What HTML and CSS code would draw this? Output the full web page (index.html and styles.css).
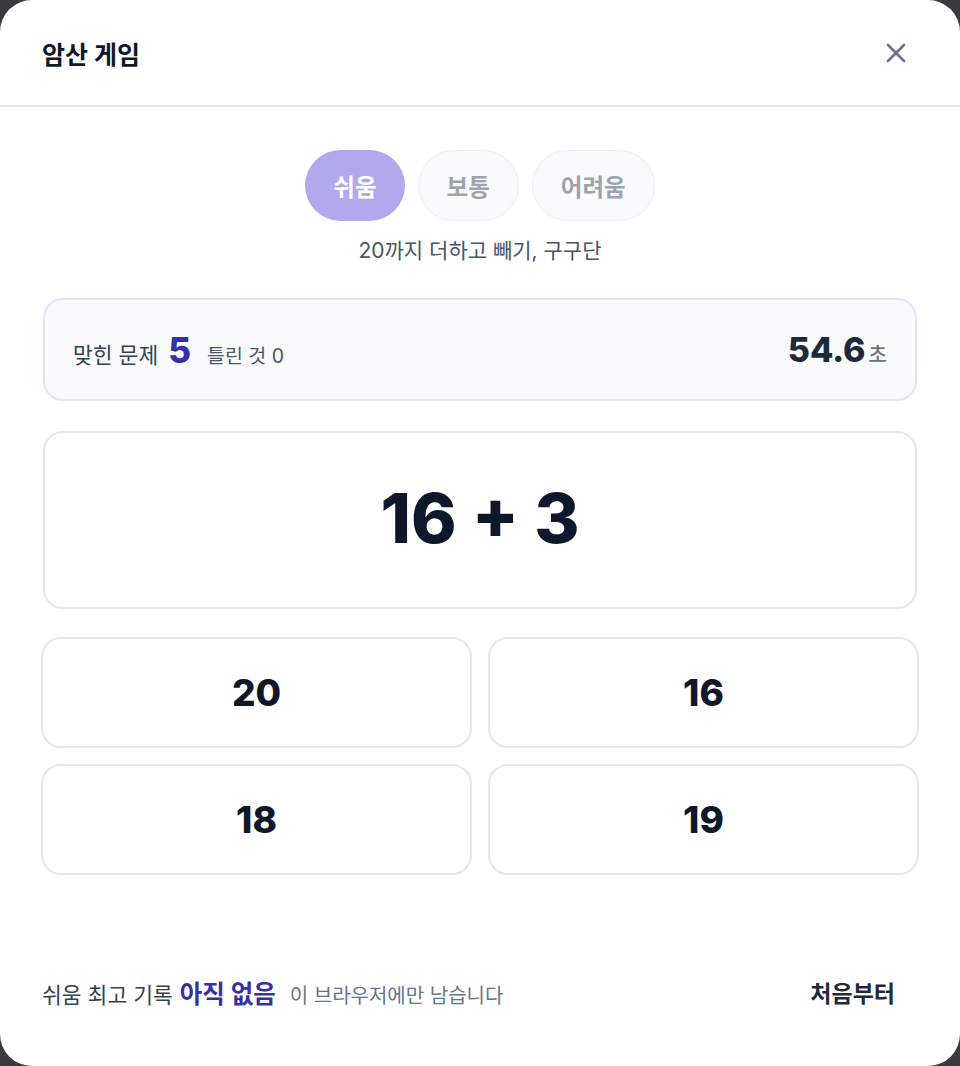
FILE: index.html
```html
<!DOCTYPE html>
<html lang="ko">

<head>
	<meta charset="utf-8">
	<title>암산 게임</title>
	<link rel="stylesheet" href="styles.css">
</head>

<body>
	<div class="modal">
		<div class="modal-head">
			<h1 class="title">암산 게임</h1>
			<button class="close" aria-label="닫기">
				<svg width="24" height="24" viewBox="0 0 24 24">
					<path d="M4 4L20 20M20 4L4 20" stroke="#64748b" stroke-width="2.6" stroke-linecap="round" fill="none" />
				</svg>
			</button>
		</div>

		<div class="modal-body">
			<ul class="levels">
				<li class="level active">쉬움</li>
				<li class="level">보통</li>
				<li class="level">어려움</li>
			</ul>
			<p class="level-desc">20까지 더하고 빼기, 구구단</p>

			<div class="score">
				<div class="score-left">
					<span class="score-label">맞힌 문제</span>
					<span class="score-num">5</span>
					<span class="score-wrong">틀린 것 0</span>
				</div>
				<div class="timer">
					<span class="timer-num">54.6</span>
					<span class="timer-unit">초</span>
				</div>
			</div>

			<div class="question">16 + 3</div>

			<div class="answers">
				<button class="answer">20</button>
				<button class="answer">16</button>
				<button class="answer">18</button>
				<button class="answer">19</button>
			</div>

			<div class="foot">
				<div class="record">
					<span class="record-label">쉬움 최고 기록</span>
					<span class="record-val">아직 없음</span>
					<span class="record-note">이 브라우저에만 남습니다</span>
				</div>
				<button class="restart">처음부터</button>
			</div>
		</div>
	</div>
</body>

</html>
```

FILE: styles.css
```css
* {
	box-sizing: border-box;
}

body {
	margin: 0;
	background: #3a3a3f;
	font-family: Inter, "Noto Sans CJK KR", sans-serif;
}

button {
	font-family: inherit;
	cursor: pointer;
}

.modal {
	width: 960px;
	height: 1066px;
	background: #fff;
	border-radius: 32px;
	display: flex;
	flex-direction: column;
	overflow: hidden;
}

.modal-head {
	height: 107px;
	border-bottom: 2px solid #e5e8ec;
	display: flex;
	align-items: center;
	justify-content: space-between;
	padding: 0 42px 0 42px;
}

.title {
	margin: 0;
	font-size: 25px;
	font-weight: 700;
	color: #0f172a;
}

.close {
	border: 0;
	background: none;
	padding: 0;
	width: 24px;
	height: 24px;
	margin-right: 10px;
}

.close svg {
	display: block;
}

.modal-body {
	flex: 1;
	display: flex;
	flex-direction: column;
	padding: 43px 42px 44px;
}

.levels {
	list-style: none;
	margin: 0;
	padding: 0;
	display: flex;
	justify-content: center;
	gap: 13px;
}

.level {
	height: 71px;
	padding: 0 28px;
	border-radius: 36px;
	border: 1px solid #eceff3;
	background: #f8fafc;
	color: #9ca3af;
	font-size: 23.5px;
	font-weight: 700;
	display: flex;
	align-items: center;
}

.level.active {
	background: #b0a9ee;
	border: 0;
	color: #fff;
}

.level-desc {
	margin: 15px 0 0;
	text-align: center;
	font-size: 21px;
	line-height: 29px;
	color: #475569;
}

.score {
	margin: 33px 1px 0;
	height: 103px;
	border: 2px solid #e2e8f0;
	border-radius: 20px;
	background: #f8fafc;
	display: flex;
	align-items: center;
	justify-content: space-between;
	padding: 0 28px;
}

.score-left,
.timer {
	display: flex;
	align-items: baseline;
}

.score-label {
	font-size: 21.5px;
	color: #334155;
}

.score-num {
	font-size: 35px;
	font-weight: 800;
	color: #3730a3;
	margin: 0 16px 0 10px;
}

.score-wrong {
	font-size: 19.5px;
	color: #475569;
}

.timer-num {
	font-size: 34px;
	font-weight: 800;
	color: #1e293b;
}

.timer-unit {
	font-size: 20px;
	font-weight: 500;
	color: #64748b;
	margin-left: 3px;
}

.question {
	margin: 30px 1px 0;
	height: 178px;
	border: 2px solid #e2e8f0;
	border-radius: 20px;
	display: flex;
	align-items: center;
	justify-content: center;
	font-size: 69px;
	font-weight: 800;
	color: #0f172a;
	padding-bottom: 4px;
}

.answers {
	margin: 28px -1px 0;
	display: grid;
	grid-template-columns: 1fr 1fr;
	gap: 16px 16px;
}

.answer {
	height: 111px;
	border: 2px solid #e2e8f0;
	border-radius: 20px;
	background: #fff;
	font-size: 37px;
	font-weight: 800;
	color: #0f172a;
}

.foot {
	margin-top: auto;
	height: 60px;
	display: flex;
	align-items: center;
	justify-content: space-between;
}

.record {
	display: flex;
	align-items: baseline;
}

.record-label {
	font-size: 21.5px;
	color: #334155;
}

.record-val {
	font-size: 24.5px;
	font-weight: 700;
	color: #3730a3;
	margin: 0 14px 0 7px;
}

.record-note {
	font-size: 20px;
	color: #64748b;
}

.restart {
	border: 0;
	background: none;
	padding: 0 23px 0 0;
	font-size: 23px;
	font-weight: 700;
	color: #1e293b;
}
```
